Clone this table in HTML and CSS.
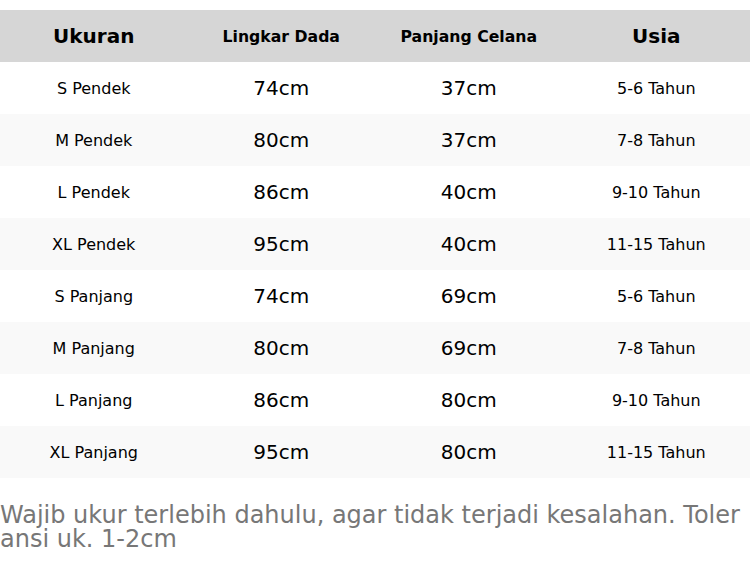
FILE: index.html
```html
<!DOCTYPE html>
<html>
<head>
<meta charset="utf-8">
<link rel="stylesheet" href="styles.css">
</head>
<body>
<table class="size-table">
  <thead>
    <tr><th class="big">Ukuran</th><th>Lingkar Dada</th><th>Panjang Celana</th><th class="big">Usia</th></tr>
  </thead>
  <tbody>
    <tr><td>S Pendek</td><td class="num">74cm</td><td class="num">37cm</td><td>5-6 Tahun</td></tr>
    <tr><td>M Pendek</td><td class="num">80cm</td><td class="num">37cm</td><td>7-8 Tahun</td></tr>
    <tr><td>L Pendek</td><td class="num">86cm</td><td class="num">40cm</td><td>9-10 Tahun</td></tr>
    <tr><td>XL Pendek</td><td class="num">95cm</td><td class="num">40cm</td><td>11-15 Tahun</td></tr>
    <tr><td>S Panjang</td><td class="num">74cm</td><td class="num">69cm</td><td>5-6 Tahun</td></tr>
    <tr><td>M Panjang</td><td class="num">80cm</td><td class="num">69cm</td><td>7-8 Tahun</td></tr>
    <tr><td>L Panjang</td><td class="num">86cm</td><td class="num">80cm</td><td>9-10 Tahun</td></tr>
    <tr><td>XL Panjang</td><td class="num">95cm</td><td class="num">80cm</td><td>11-15 Tahun</td></tr>
  </tbody>
</table>
<p class="note">Wajib ukur terlebih dahulu, agar tidak terjadi kesalahan. Toleransi uk. 1-2cm</p>
</body>
</html>
```
FILE: styles.css
```css
html, body {
  margin: 0;
  padding: 0;
  background: #ffffff;
}
body {
  font-family: "DejaVu Sans", sans-serif;
  color: #000;
  padding-top: 10px;
}
.size-table {
  width: 750px;
  border-collapse: collapse;
  table-layout: fixed;
}
.size-table th,
.size-table td {
  height: 52px;
  padding: 0;
  text-align: center;
  vertical-align: middle;
}
.size-table thead tr {
  background: #d6d6d6;
}
.size-table th {
  font-weight: bold;
  font-size: 15.7px;
}
.size-table th.big {
  font-size: 20px;
}
.size-table td {
  font-size: 16px;
}
.size-table td.num {
  font-size: 20px;
}
.size-table tbody tr:nth-child(even) {
  background: #f9f9f9;
}
.note {
  margin: 25px 0 0 0;
  font-size: 24px;
  line-height: 24px;
  color: #777777;
  word-break: break-all;
}
```
